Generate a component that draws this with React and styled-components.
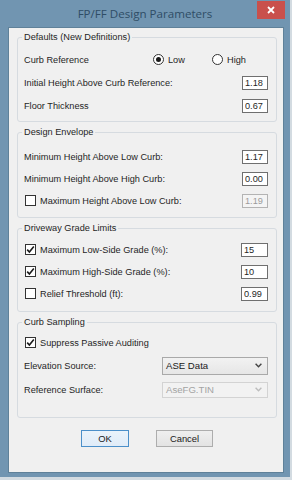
import React from 'react';
import styled, { createGlobalStyle } from 'styled-components';

const GlobalStyle = createGlobalStyle`
  html, body {
    margin: 0;
    padding: 0;
    background: #d3dbe1;
  }
  body {
    width: 292px;
    height: 480px;
    overflow: hidden;
    font-family: "Liberation Sans", Arial, sans-serif;
  }
`;

// --- Window chrome ---
const Window = styled.div`
  width: 290px;
  height: 477px;
  box-sizing: border-box;
  background: #7195b1;
  display: flex;
  flex-direction: column;
  padding: 0 6px 4px 8px;
`;

const TitleBar = styled.div`
  height: 27px;
  flex: 0 0 27px;
  display: grid;
  grid-template-columns: 1fr auto 1fr;
  align-items: start;
  margin: 0 -6px 0 -8px;
`;

const Title = styled.div`
  grid-column: 2;
  padding-top: 6px;
  font-family: "Open Sans", "Liberation Sans", sans-serif;
  font-size: 11.6px;
  line-height: 16px;
  color: #2f4d66;
`;

const CloseButton = styled.div`
  grid-column: 3;
  justify-self: end;
  margin: 1px 5px 0 0;
  width: 28px;
  height: 18px;
  background: #c9504c;
  display: flex;
  align-items: center;
  justify-content: center;
`;

const Client = styled.div`
  flex: 1;
  background: #f0f0f0;
  border: 1px solid #5f8199;
  padding: 2.5px 6px 0 8px;
  display: flex;
  flex-direction: column;
  gap: 4px;
`;

// --- Group boxes ---
const Group = styled.fieldset`
  margin: 0;
  border: 1px solid #d6dbe0;
  border-radius: 3px;
  padding: ${p => p.$pt}px 8px ${p => p.$pb}px 6px;
  min-width: 0;
`;

const Legend = styled.legend`
  margin-left: -2px;
  padding: 0 2px;
  font-size: 9.2px;
  line-height: 13px;
  color: #1f1f1f;
`;

const Row = styled.div`
  display: flex;
  align-items: center;
  height: ${p => p.$h || 22}px;
  font-size: 9.2px;
  color: #1f1f1f;
`;

const Label = styled.span`
  flex: ${p => (p.$w ? `0 0 ${p.$w}px` : '0 1 auto')};
  white-space: nowrap;
`;

const Field = styled.input`
  margin-left: auto;
  width: ${p => p.$w || 26}px;
  height: 14px;
  box-sizing: border-box;
  border: 1px solid ${p => (p.disabled ? '#b3b3b3' : '#6f6f6f')};
  background: ${p => (p.disabled ? '#f4f4f4' : '#ffffff')};
  color: ${p => (p.disabled ? '#9b9b9b' : '#1f1f1f')};
  font-family: "Liberation Sans", Arial, sans-serif;
  font-size: 9.2px;
  padding: 0 2px;
  outline: none;
`;

// --- Check / radio ---
const CheckWrap = styled.span`
  display: inline-flex;
  align-items: center;
  gap: 4px;
`;

const Box = styled.span`
  width: 11px;
  height: 11px;
  box-sizing: border-box;
  margin-left: 1px;
  border: 1px solid #333333;
  background: #ffffff;
  display: flex;
  align-items: center;
  justify-content: center;
`;

const Check = ({ checked, children }) => (
  <CheckWrap>
    <Box>
      {checked && (
        <svg width="9" height="9" viewBox="0 0 9 9">
          <path d="M1.2 4.6 L3.4 7 L7.8 1.6" fill="none" stroke="#1a1a1a" strokeWidth="1.6" />
        </svg>
      )}
    </Box>
    {children}
  </CheckWrap>
);

const RadioGroup = styled.div`
  display: flex;
  align-items: center;
`;

const RadioOption = styled.span`
  display: inline-flex;
  align-items: center;
  gap: 4px;
  width: ${p => p.$w}px;
`;

const Dot = styled.span`
  width: 11px;
  height: 11px;
  box-sizing: border-box;
  border-radius: 50%;
  border: 1px solid #333333;
  background: #ffffff;
  display: flex;
  align-items: center;
  justify-content: center;

  &::after {
    content: '';
    width: 5px;
    height: 5px;
    border-radius: 50%;
    background: ${p => (p.$on ? '#1a1a1a' : 'transparent')};
  }
`;

// --- Dropdown ---
const Select = styled.div`
  margin-left: auto;
  width: 106px;
  height: ${p => p.$h}px;
  box-sizing: border-box;
  border: 1px solid ${p => (p.$disabled ? '#d3d3d3' : '#a9a9a9')};
  background: ${p => (p.$disabled ? '#f2f2f2' : 'linear-gradient(#f2f2f2, #e6e6e6)')};
  color: ${p => (p.$disabled ? '#a3a3a3' : '#1a1a1a')};
  display: flex;
  align-items: center;
  justify-content: space-between;
  padding: 0 5px 0 3px;
  font-size: 9.6px;
`;

const Chevron = ({ color }) => (
  <svg width="7" height="5" viewBox="0 0 7 5">
    <path d="M0.6 0.8 L3.5 3.8 L6.4 0.8" fill="none" stroke={color} strokeWidth="1.4" />
  </svg>
);

// --- Buttons ---
const ButtonBar = styled.div`
  display: flex;
  justify-content: center;
  gap: 27px;
  margin-top: 8px;
`;

const Button = styled.div`
  width: ${p => p.$w}px;
  height: 17px;
  box-sizing: border-box;
  border: 1px solid ${p => (p.$primary ? '#4b8fc9' : '#adadad')};
  background: ${p => (p.$primary ? 'linear-gradient(#eaf3fb, #e0ecf8)' : 'linear-gradient(#efefef, #e3e3e3)')};
  display: flex;
  align-items: center;
  justify-content: center;
  font-size: 9.4px;
  color: #1a1a1a;
`;

export default function App() {
  return (
    <>
      <GlobalStyle />
      <Window>
        <TitleBar>
          <Title>FP/FF Design Parameters</Title>
          <CloseButton>
            <svg width="8" height="8" viewBox="0 0 8 8">
              <path d="M1 1 L7 7 M7 1 L1 7" stroke="#ffffff" strokeWidth="1.8" />
            </svg>
          </CloseButton>
        </TitleBar>

        <Client>
          <Group $pt={4.5} $pb={4}>
            <Legend>Defaults (New Definitions)</Legend>
            <Row $h={23}>
              <Label $w={129}>Curb Reference</Label>
              <RadioGroup>
                <RadioOption $w={59}><Dot $on />Low</RadioOption>
                <RadioOption $w={40}><Dot />High</RadioOption>
              </RadioGroup>
            </Row>
            <Row $h={23}>
              <Label>Initial Height Above Curb Reference:</Label>
              <Field readOnly value="1.18" />
            </Row>
            <Row $h={23}>
              <Label>Floor Thickness</Label>
              <Field readOnly value="0.67" />
            </Row>
          </Group>

          <Group $pt={6.5} $pb={5}>
            <Legend>Design Envelope</Legend>
            <Row>
              <Label>Minimum Height Above Low Curb:</Label>
              <Field readOnly value="1.17" />
            </Row>
            <Row>
              <Label>Minimum Height Above High Curb:</Label>
              <Field readOnly value="0.00" />
            </Row>
            <Row>
              <Check>Maximum Height Above Low Curb:</Check>
              <Field disabled value="1.19" readOnly />
            </Row>
          </Group>

          <Group $pt={4} $pb={6}>
            <Legend>Driveway Grade Limits</Legend>
            <Row>
              <Check checked>Maximum Low-Side Grade (%):</Check>
              <Field readOnly value="15" $w={27} />
            </Row>
            <Row>
              <Check checked>Maximum High-Side Grade (%):</Check>
              <Field readOnly value="10" $w={27} />
            </Row>
            <Row>
              <Check>Relief Threshold (ft):</Check>
              <Field readOnly value="0.99" $w={27} />
            </Row>
          </Group>

          <Group $pt={3} $pb={15}>
            <Legend>Curb Sampling</Legend>
            <Row>
              <Check checked>Suppress Passive Auditing</Check>
            </Row>
            <Row $h={24}>
              <Label>Elevation Source:</Label>
              <Select $h={18}>
                <span>ASE Data</span>
                <Chevron color="#444444" />
              </Select>
            </Row>
            <Row $h={24}>
              <Label>Reference Surface:</Label>
              <Select $h={16} $disabled>
                <span>AseFG.TIN</span>
                <Chevron color="#bdbdbd" />
              </Select>
            </Row>
          </Group>

          <ButtonBar>
            <Button $primary $w={48}>OK</Button>
            <Button $w={57}>Cancel</Button>
          </ButtonBar>
        </Client>
      </Window>
    </>
  );
}
